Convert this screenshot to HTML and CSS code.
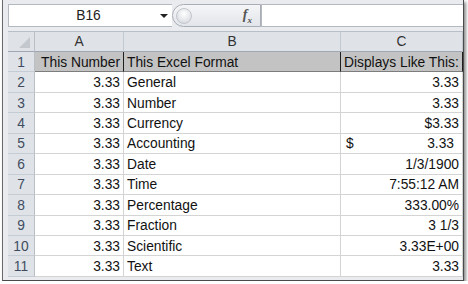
FILE: index.html
```html
<!DOCTYPE html>
<html lang="en">
<head>
    <meta charset="UTF-8">
    <title>Excel Formats</title>
    <link rel="stylesheet" href="styles.css">
</head>
<body>
    <div class="window">
        <div class="formulaBar">
            <div class="nameBox">
                <span class="nameText">B16</span>
                <span class="arrow"></span>
            </div>
            <div class="fxBox">
                <span class="knob"></span>
                <span class="fx">f<sub>x</sub></span>
            </div>
            <div class="formulaInput"></div>
        </div>

        <div class="sheet">
            <div class="corner"><span class="tri"></span></div>
            <div class="colHead">A</div>
            <div class="colHead">B</div>
            <div class="colHead">C</div>

            <div class="rowHead">1</div>
            <div class="cell title num">This Number</div>
            <div class="cell title">This Excel Format</div>
            <div class="cell title">Displays Like This:</div>

            <div class="rowHead">2</div>
            <div class="cell num">3.33</div>
            <div class="cell">General</div>
            <div class="cell num">3.33</div>

            <div class="rowHead">3</div>
            <div class="cell num">3.33</div>
            <div class="cell">Number</div>
            <div class="cell num">3.33</div>

            <div class="rowHead">4</div>
            <div class="cell num">3.33</div>
            <div class="cell">Currency</div>
            <div class="cell num">$3.33</div>

            <div class="rowHead">5</div>
            <div class="cell num">3.33</div>
            <div class="cell">Accounting</div>
            <div class="cell accounting"><span>$</span><span>3.33</span></div>

            <div class="rowHead">6</div>
            <div class="cell num">3.33</div>
            <div class="cell">Date</div>
            <div class="cell num">1/3/1900</div>

            <div class="rowHead">7</div>
            <div class="cell num">3.33</div>
            <div class="cell">Time</div>
            <div class="cell num">7:55:12 AM</div>

            <div class="rowHead">8</div>
            <div class="cell num">3.33</div>
            <div class="cell">Percentage</div>
            <div class="cell num">333.00%</div>

            <div class="rowHead">9</div>
            <div class="cell num">3.33</div>
            <div class="cell">Fraction</div>
            <div class="cell num">3 1/3</div>

            <div class="rowHead">10</div>
            <div class="cell num">3.33</div>
            <div class="cell">Scientific</div>
            <div class="cell num">3.33E+00</div>

            <div class="rowHead">11</div>
            <div class="cell num">3.33</div>
            <div class="cell">Text</div>
            <div class="cell num">3.33</div>
        </div>
    </div>
</body>
</html>
```

FILE: styles.css
```css
body {
    margin: 0;
    background-color: #fff;
    font-family: "Liberation Sans", Arial, sans-serif;
    font-size: 13.8px;
}

.window {
    margin-left: 2px;
    width: 462px;
    height: 281px;
    box-sizing: border-box;
    border-left: 1px solid #6a6a6a;
    border-right: 1px solid #4a4a4a;
    border-bottom: 1px solid #4a4a4a;
    background-color: #e9ebee;
    box-shadow: 2px 2px 3px rgba(0, 0, 0, 0.45);
    overflow: hidden;
}

/* formula bar */
.formulaBar {
    display: flex;
    height: 31px;
    padding: 4px 0 0 5px;
    box-sizing: border-box;
}

.nameBox {
    width: 164px;
    height: 23px;
    box-sizing: border-box;
    display: flex;
    align-items: center;
    background-color: #fff;
    border: 1px solid #b4b9c0;
    border-right: none;
}
.nameText {
    flex: 1;
    text-align: center;
    padding-left: 8px;
    color: #222;
}
.arrow {
    width: 0;
    height: 0;
    margin-right: 4px;
    border-left: 4px solid transparent;
    border-right: 4px solid transparent;
    border-top: 4px solid #222;
}

.fxBox {
    width: 89px;
    height: 23px;
    box-sizing: border-box;
    display: flex;
    align-items: center;
    justify-content: space-between;
    padding: 0 8px 0 3px;
    border: 1px solid #a9aeb6;
    border-radius: 12px 0 0 12px;
    background: linear-gradient(#f4f5f7, #e2e5ea);
}
.knob {
    width: 14px;
    height: 14px;
    border-radius: 50%;
    background: radial-gradient(circle at 50% 35%, #fff, #cfd3d9);
    border: 1px solid #c2c6cc;
}
.fx {
    font-family: "Liberation Serif", serif;
    font-style: italic;
    font-weight: bold;
    font-size: 14px;
    color: #555;
}
.fx sub {
    font-size: 9px;
}

.formulaInput {
    flex: 1;
    height: 23px;
    box-sizing: border-box;
    background-color: #fff;
    border: 1px solid #b4b9c0;
    border-right: none;
}

/* sheet */
.sheet {
    display: grid;
    grid-template-columns: 27px 89px 217px 122px;
    grid-template-rows: 21px repeat(11, 20.45px);
    margin-left: 5px;
    background-color: #fff;
    width: 455px;
}

.corner, .colHead, .rowHead, .cell {
    box-sizing: border-box;
    border-right: 1px solid #d4d4d4;
    border-bottom: 1px solid #d4d4d4;
    display: flex;
    align-items: center;
    white-space: nowrap;
}

.corner {
    position: relative;
    background-color: #dfe3e8;
    border-top: 1px solid #b9bfc7;
    border-right-color: #b9bfc7;
    border-bottom-color: #9ea7b3;
}
.tri {
    position: absolute;
    right: 4px;
    bottom: 3px;
    width: 0;
    height: 0;
    border-left: 11px solid transparent;
    border-bottom: 11px solid #c3c8cf;
}

.colHead {
    justify-content: center;
    background-color: #dfe3e8;
    border-top: 1px solid #b9bfc7;
    border-right-color: #c2c8d0;
    border-bottom-color: #9ea7b3;
    color: #333;
}

.rowHead {
    justify-content: center;
    background-color: #dfe3e8;
    border-right-color: #b9bfc7;
    border-bottom-color: #c6ccd4;
    color: #3e4c5f;
    padding-top: 1px;
}

.cell {
    padding: 1px 3px 0 3px;
    color: #111;
}
.num {
    justify-content: flex-end;
}

.title {
    background-color: #c3c3c3;
    border-right-color: #1e1e1e;
    border-bottom-color: #7d7d7d;
    justify-content: flex-start;
}
.title.num {
    justify-content: flex-end;
}

.accounting {
    justify-content: space-between;
    padding: 1px 8px 0 5px;
}
```
